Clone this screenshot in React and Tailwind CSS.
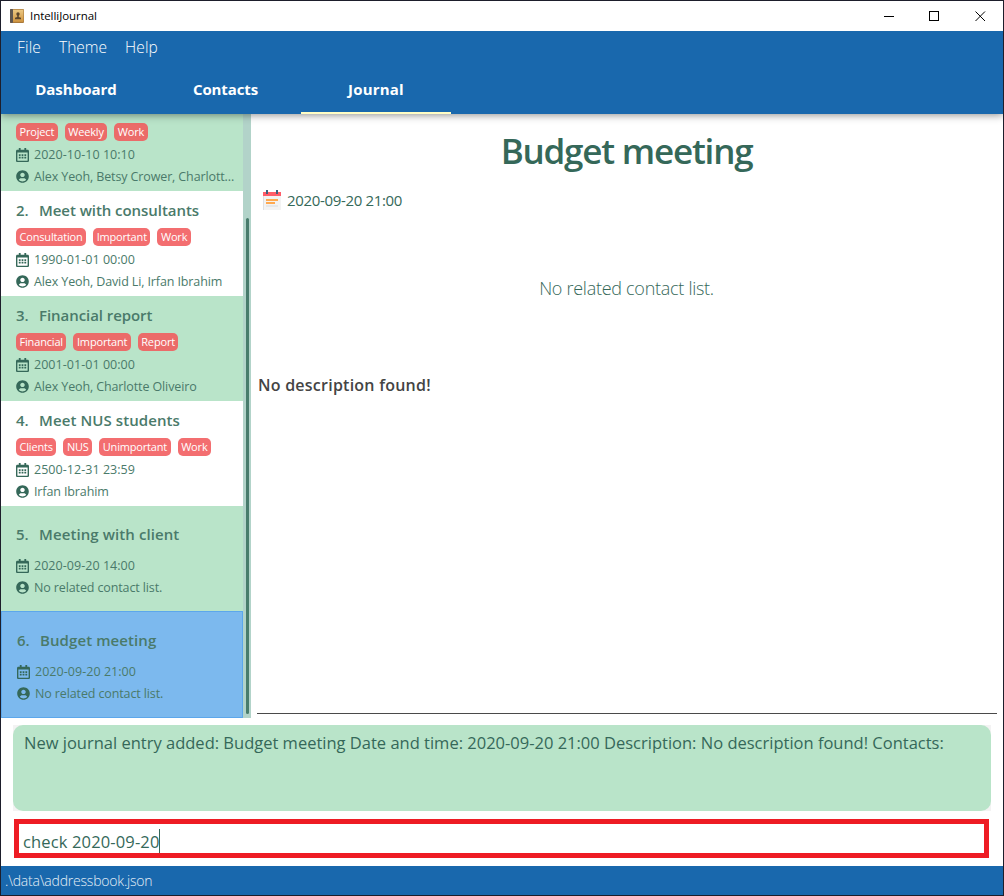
import { FaRegCalendarAlt, FaUserCircle } from "react-icons/fa";

const entries = [
  { title: "Weekly team meeting", tags: ["Project", "Weekly", "Work"], date: "2020-10-10 10:10", people: "Alex Yeoh, Betsy Crower, Charlott..." },
  { title: "Meet with consultants", tags: ["Consultation", "Important", "Work"], date: "1990-01-01 00:00", people: "Alex Yeoh, David Li, Irfan Ibrahim" },
  { title: "Financial report", tags: ["Financial", "Important", "Report"], date: "2001-01-01 00:00", people: "Alex Yeoh, Charlotte Oliveiro" },
  { title: "Meet NUS students", tags: ["Clients", "NUS", "Unimportant", "Work"], date: "2500-12-31 23:59", people: "Irfan Ibrahim", wide: true },
  { title: "Meeting with client", tags: [], date: "2020-09-20 14:00", people: "No related contact list.", wide: true },
  { title: "Budget meeting", tags: [], date: "2020-09-20 21:00", people: "No related contact list.", selected: true, wide: true },
];

function Entry({ entry, index }) {
  const tint = index % 2 === 0;
  const frame = entry.selected
    ? "h-[107px] border border-[#5ca7eb] bg-[#7cb9ee]"
    : tint
      ? "h-[105px] bg-[#b9e4c9]"
      : "h-[105px] bg-white";
  return (
    <li className={`flex shrink-0 flex-col pl-[15px] whitespace-nowrap ${frame} ${entry.tags.length ? "pt-[7px]" : "pt-4"}`}>
      <div className="flex h-6 items-center text-[15px] font-semibold text-[#4a7a6a]">
        <span className="w-[23px]">{index + 1}.</span>
        <span className={entry.wide ? "tracking-[0.09px]" : "tracking-[-0.06px]"}>{entry.title}</span>
      </div>
      {entry.tags.length > 0 ? (
        <div className="mt-[6px] mb-[3px] flex gap-[7px]">
          {entry.tags.map((tag) => (
            <span
              key={tag}
              className={`flex h-[18px] items-center rounded-[5px] px-[3.5px] text-[11px] tracking-[-0.17px] text-white ${tint ? "bg-[#eb6b69]" : "bg-[#f36e70]"}`}
            >
              {tag}
            </span>
          ))}
        </div>
      ) : (
        <div className="h-[9px]" />
      )}
      <div className="flex h-[22px] items-center gap-[5px] text-[12.5px] text-[#4a7a6a]">
        <FaRegCalendarAlt className="h-[14px] w-[13px] text-[#356859]" preserveAspectRatio="none" />
        <span className="tracking-[0.04px]">{entry.date}</span>
      </div>
      <div className="flex h-[22px] items-center gap-[5px] text-[12.5px] text-[#4a7a6a]">
        <FaUserCircle className="mb-px size-[13px] text-[#356859]" />
        <span className="tracking-[-0.12px]">{entry.people}</span>
      </div>
    </li>
  );
}

function BookIcon() {
  return (
    <svg width="14" height="14" viewBox="0 0 14 14">
      <defs>
        <linearGradient id="cover" x1="0" y1="0" x2="0" y2="1">
          <stop offset="0" stopColor="#ecc883" />
          <stop offset="1" stopColor="#cf9440" />
        </linearGradient>
      </defs>
      <rect width="14" height="14" rx="1" fill="#a9793b" />
      <rect width="3" height="14" rx="1" fill="#5f5650" />
      <rect x="3" y="0.7" width="10.4" height="12.2" fill="url(#cover)" />
      <circle cx="8" cy="5" r="1.7" fill="#5b452c" />
      <path d="M7.2 6h1.6v2l2.2 .7v1.5H5V8.700l2.200-.7z" fill="#5b452c" />
    </svg>
  );
}

function CalendarIcon() {
  return (
    <svg width="18" height="20" viewBox="0 0 18 20" shapeRendering="crispEdges">
      <rect y="6" width="18" height="14" fill="#f3f3f3" />
      <rect y="6" width="1" height="14" fill="#dfe1e3" />
      <rect y="2" width="18" height="4" fill="#ff5d69" />
      <rect x="3" width="2" height="4" fill="#3f5f7d" />
      <rect x="13" width="2" height="4" fill="#3f5f7d" />
      <rect x="3" y="9" width="12" height="2" fill="#ffa950" />
      <rect x="3" y="12" width="9" height="2" fill="#ffa950" />
      <rect x="3" y="15" width="12" height="2" fill="#e6e7e8" />
    </svg>
  );
}

export default function App() {
  return (
    <div className="flex h-[896px] w-[1004px] flex-col overflow-hidden border border-[#1d1e2b] bg-white font-['Open_Sans','Noto_Sans',sans-serif] text-[#356859]">
      <header className="relative z-20 flex h-[30px] shrink-0 items-center bg-white pl-[9px] text-black">
        <BookIcon />
        <span className="ml-[6px] text-[11.5px] tracking-[-0.05px]">IntelliJournal</span>
        <div className="ml-auto flex items-center gap-[35px] pr-[17px]">
          <svg width="10" height="11" shapeRendering="crispEdges"><path d="M0 5.5h10" stroke="#000" /></svg>
          <svg width="11" height="11" shapeRendering="crispEdges"><path d="M.5 .5h9v9h-9z" fill="none" stroke="#000" /></svg>
          <svg width="11" height="11"><path d="M.5 .5l9.500 9.500M10 .5l-9.500 9.500" stroke="#000" strokeWidth="1" /></svg>
        </div>
      </header>

      <div className="relative z-10 h-[83px] shrink-0 bg-[#1968ad] text-white shadow-[0_1px_8px_rgba(0,0,0,0.45)]">
        <nav className="flex h-[34px] items-center gap-[18px] pl-4 text-[15.5px] font-light text-white">
          <span className="tracking-[0.17px]">File</span>
          <span>Theme</span>
          <span className="tracking-[0.15px]">Help</span>
        </nav>
        <nav className="flex h-[49px] text-center text-[15px] font-bold">
          <span className="w-[150px] pt-[13px]">Dashboard</span>
          <span className="w-[150px] pt-[13px] pr-px tracking-[-0.1px]">Contacts</span>
          <span className="w-[150px] border-b-2 border-[#fffdc4] pt-[13px] tracking-[0.2px]">Journal</span>
        </nav>
      </div>

      <main className="flex h-[604px] shrink-0">
        <ul className="flex w-[242px] flex-col justify-end overflow-hidden">
          {entries.map((entry, i) => (
            <Entry key={entry.title} entry={entry} index={i} />
          ))}
        </ul>
        <div className="flex w-2 flex-col items-center bg-[#b2d3c9] pt-[104px]">
          <div className="h-[496px] w-[3px] rounded-full bg-[#487c6c]" />
        </div>
        <section className="flex flex-1 flex-col pr-[6px] pl-[6px]">
          <h1 className="mt-[13px] pr-[1px] text-center text-[35px] leading-[48px] font-semibold tracking-[-1.2px]">Budget meeting</h1>
          <div className="mt-[14px] flex h-[22px] items-center gap-[6px] pl-[6px] text-[15px] tracking-[-0.34px]">
            <CalendarIcon />
            <span>2020-09-20 21:00</span>
          </div>
          <p className="mt-[64px] pr-px text-center text-[18px] leading-[26px] font-light tracking-[-0.28px]">No related contact list.</p>
          <p className="mt-[72px] pl-px text-[16px] leading-6 font-semibold tracking-[0.24px] text-[#444]">No description found!</p>
          <div className="mt-auto mb-1 h-px bg-[#4a4a4a]" />
        </section>
      </main>

      <div className="mx-3 mt-[7px] h-[86px] shrink-0 bg-[#f3f3f3]">
        <div className="h-full rounded-[10px] bg-[#b9e4c9] pt-[5px] pl-[11px] text-[16.5px] leading-[25px] whitespace-nowrap">
          New journal entry added: Budget meeting Date and time: 2020-09-20 21:00 Description: No description found! Contacts:
        </div>
      </div>

      <div className="mt-2 mr-[14px] ml-[13px] flex h-[39px] shrink-0 items-start border-[5px] border-[#ee1c24] pl-1 text-[16.5px] tracking-[0.14px]">
        <span className="pt-[5px] leading-[26px]">check 2020-09-20</span>
        <span className="mt-[5px] h-6 w-px bg-[#356859]" />
      </div>

      <footer className="mt-2 flex flex-1 items-center bg-[#1968ad] pl-1 text-[14px] font-light tracking-[-0.2px] text-[#e6eff7]">.\data\addressbook.json</footer>
    </div>
  );
}
